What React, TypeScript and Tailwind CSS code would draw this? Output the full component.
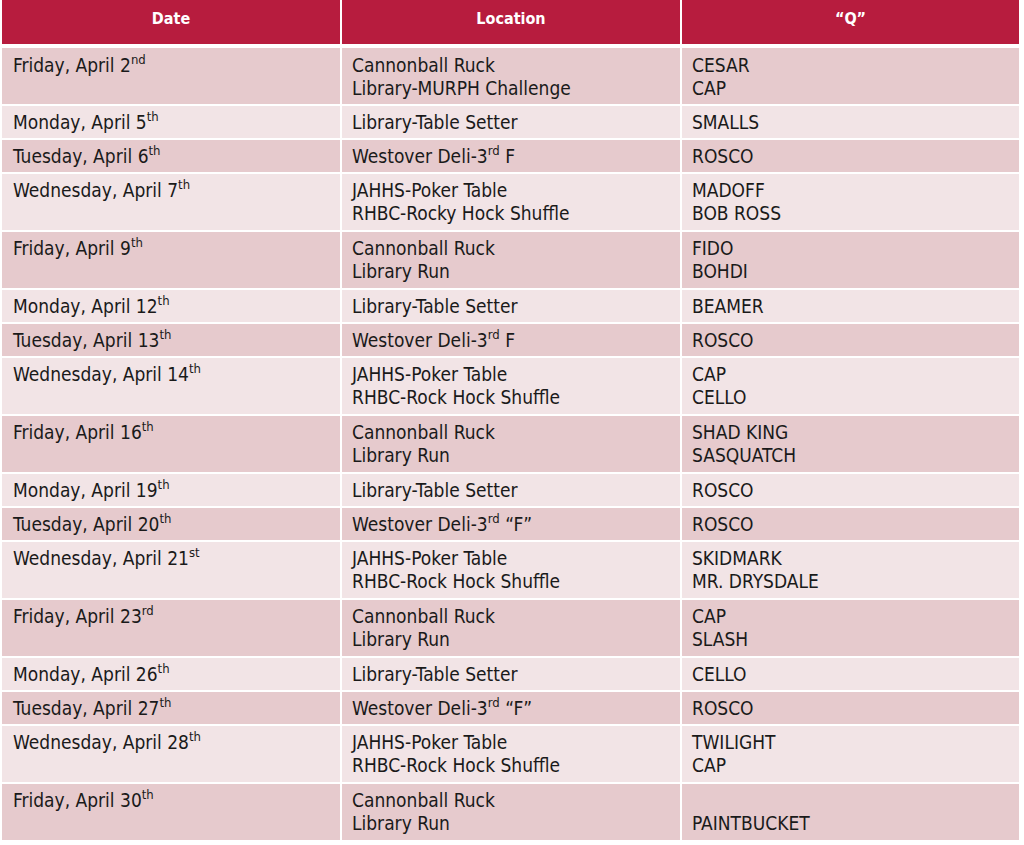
type Row = {
  day: string;
  num: string;
  sup: string;
  loc: React.ReactNode[];
  q: string[];
};

const Sup = ({ children }: { children: React.ReactNode }) => (
  <sup className="text-[13px] relative top-[-1px] align-super leading-none">{children}</sup>
);

const deli = (
  <>
    Westover Deli-3<Sup>rd</Sup> F
  </>
);
const deliQ = (
  <>
    Westover Deli-3<Sup>rd</Sup> “F”
  </>
);

const rows: Row[] = [
  { day: "Friday", num: "2", sup: "nd", loc: ["Cannonball Ruck", "Library-MURPH Challenge"], q: ["CESAR", "CAP"] },
  { day: "Monday", num: "5", sup: "th", loc: ["Library-Table Setter"], q: ["SMALLS"] },
  { day: "Tuesday", num: "6", sup: "th", loc: [deli], q: ["ROSCO"] },
  { day: "Wednesday", num: "7", sup: "th", loc: ["JAHHS-Poker Table", "RHBC-Rocky Hock Shuffle"], q: ["MADOFF", "BOB ROSS"] },
  { day: "Friday", num: "9", sup: "th", loc: ["Cannonball Ruck", "Library Run"], q: ["FIDO", "BOHDI"] },
  { day: "Monday", num: "12", sup: "th", loc: ["Library-Table Setter"], q: ["BEAMER"] },
  { day: "Tuesday", num: "13", sup: "th", loc: [deli], q: ["ROSCO"] },
  { day: "Wednesday", num: "14", sup: "th", loc: ["JAHHS-Poker Table", "RHBC-Rock Hock Shuffle"], q: ["CAP", "CELLO"] },
  { day: "Friday", num: "16", sup: "th", loc: ["Cannonball Ruck", "Library Run"], q: ["SHAD KING", "SASQUATCH"] },
  { day: "Monday", num: "19", sup: "th", loc: ["Library-Table Setter"], q: ["ROSCO"] },
  { day: "Tuesday", num: "20", sup: "th", loc: [deliQ], q: ["ROSCO"] },
  { day: "Wednesday", num: "21", sup: "st", loc: ["JAHHS-Poker Table", "RHBC-Rock Hock Shuffle"], q: ["SKIDMARK", "MR. DRYSDALE"] },
  { day: "Friday", num: "23", sup: "rd", loc: ["Cannonball Ruck", "Library Run"], q: ["CAP", "SLASH"] },
  { day: "Monday", num: "26", sup: "th", loc: ["Library-Table Setter"], q: ["CELLO"] },
  { day: "Tuesday", num: "27", sup: "th", loc: [deliQ], q: ["ROSCO"] },
  { day: "Wednesday", num: "28", sup: "th", loc: ["JAHHS-Poker Table", "RHBC-Rock Hock Shuffle"], q: ["TWILIGHT", "CAP"] },
  { day: "Friday", num: "30", sup: "th", loc: ["Cannonball Ruck", "Library Run"], q: ["\u00a0", "PAINTBUCKET"] },
];

export default function App() {
  return (
    <div
      className="w-[1024px] h-[845px] bg-white text-[#1a1a1a] overflow-hidden"
      style={{ fontFamily: '"DejaVu Sans Condensed", "DejaVu Sans", sans-serif' }}
    >
      <div className="grid grid-cols-[338px_338px_337px] gap-x-[2px] pl-[2px]">
        {["Date", "Location", "“Q”"].map((h) => (
          <div
            key={h}
            className="h-[44px] bg-[#b71c3e] text-white font-bold text-[16px] text-center pt-[9px] leading-[20px]"
          >
            {h}
          </div>
        ))}
      </div>
      <div className="flex flex-col gap-y-[2px] pt-[4px]">
        {rows.map((r, i) => {
          const dbl = r.loc.length > 1;
          const bg = i % 2 === 0 ? "bg-[#e6cacd]" : "bg-[#f2e4e6]";
          const h = dbl ? "h-[56px]" : "h-[32px]";
          const pt = i === 0 ? "pt-[6px]" : "pt-[5px]";
          const cell = `${bg} ${h} ${pt} text-[19px] leading-[23px]`;
          return (
            <div key={i} className="grid grid-cols-[338px_338px_337px] gap-x-[2px] pl-[2px]">
              <div className={`${cell} pl-[11px]`}>
                {r.day}, April {r.num}
                <Sup>{r.sup}</Sup>
              </div>
              <div className={`${cell} pl-[10px]`}>
                {r.loc.map((l, j) => (
                  <div key={j}>{l}</div>
                ))}
              </div>
              <div className={`${cell} pl-[10px]`}>
                {r.q.map((l, j) => (
                  <div key={j}>{l}</div>
                ))}
              </div>
            </div>
          );
        })}
      </div>
    </div>
  );
}
